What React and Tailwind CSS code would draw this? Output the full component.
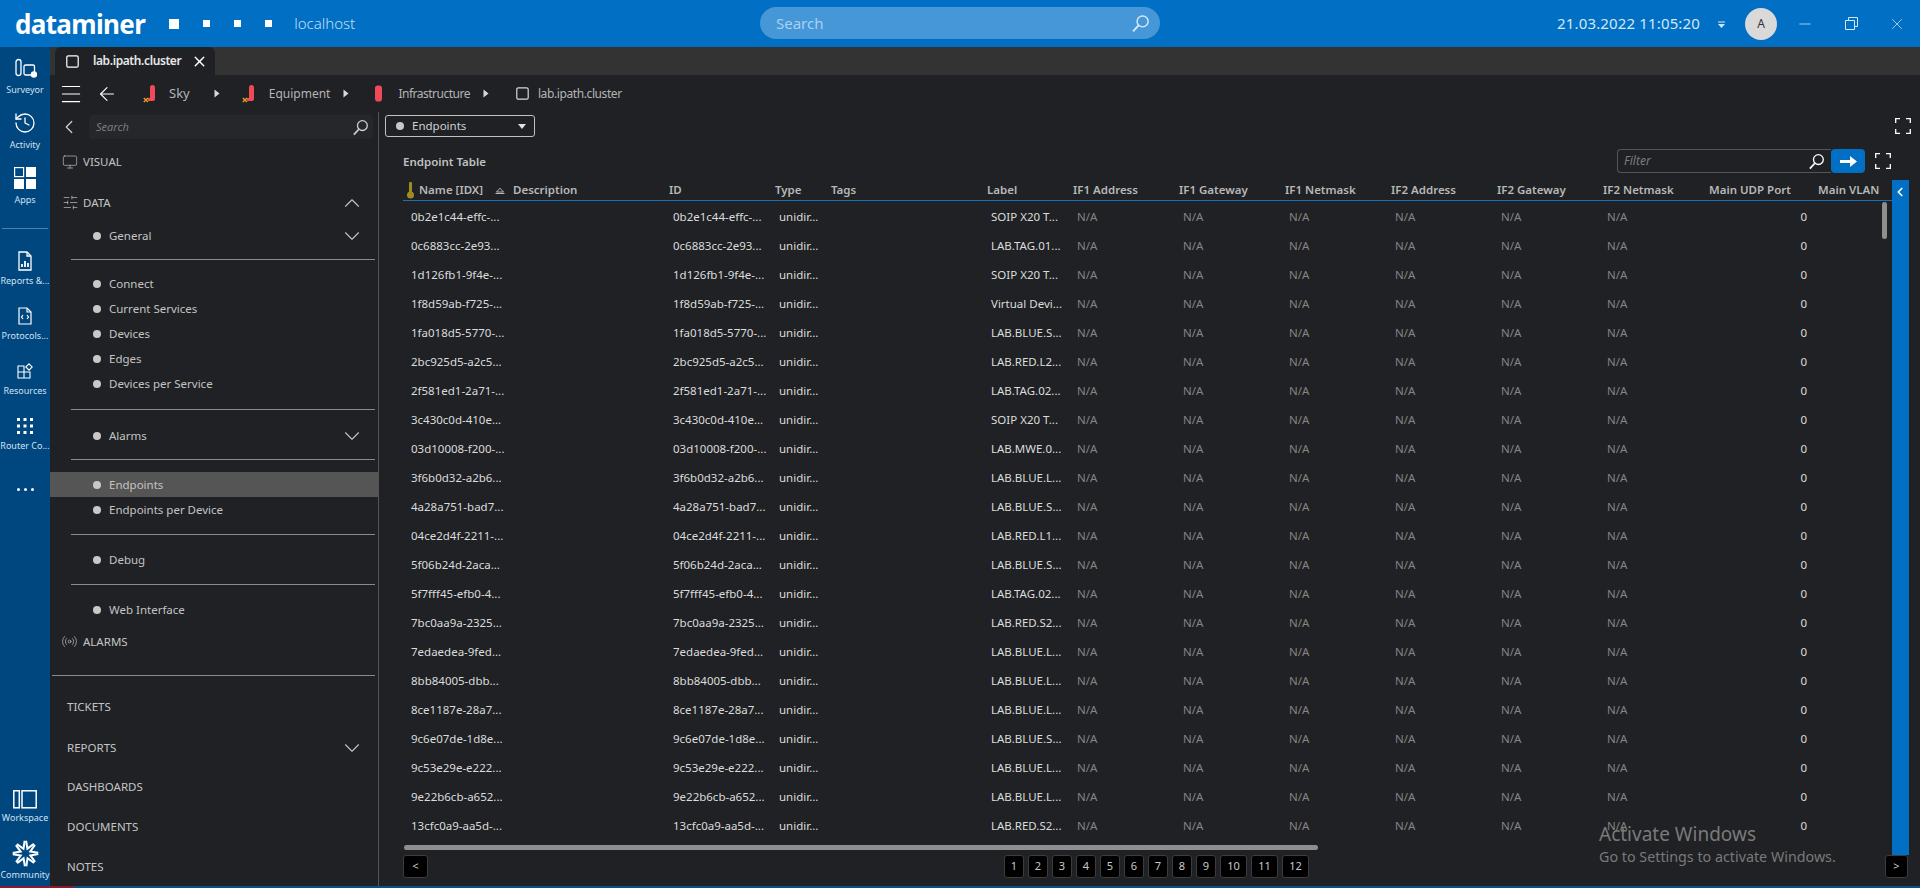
import React from 'react';
import { History, Monitor, SlidersHorizontal, Radio, ChevronUp, ChevronDown, ChevronLeft, ArrowLeft, Menu, X, Minus } from 'lucide-react';

const rows = [
  ['0b2e1c44-effc-...', 'SOIP X20 T...'],
  ['0c6883cc-2e93...', 'LAB.TAG.01...'],
  ['1d126fb1-9f4e-...', 'SOIP X20 T...'],
  ['1f8d59ab-f725-...', 'Virtual Devi...'],
  ['1fa018d5-5770-...', 'LAB.BLUE.S...'],
  ['2bc925d5-a2c5...', 'LAB.RED.L2...'],
  ['2f581ed1-2a71-...', 'LAB.TAG.02...'],
  ['3c430c0d-410e...', 'SOIP X20 T...'],
  ['03d10008-f200-...', 'LAB.MWE.0...'],
  ['3f6b0d32-a2b6...', 'LAB.BLUE.L...'],
  ['4a28a751-bad7...', 'LAB.BLUE.S...'],
  ['04ce2d4f-2211-...', 'LAB.RED.L1...'],
  ['5f06b24d-2aca...', 'LAB.BLUE.S...'],
  ['5f7fff45-efb0-4...', 'LAB.TAG.02...'],
  ['7bc0aa9a-2325...', 'LAB.RED.S2...'],
  ['7edaedea-9fed...', 'LAB.BLUE.L...'],
  ['8bb84005-dbb...', 'LAB.BLUE.L...'],
  ['8ce1187e-28a7...', 'LAB.BLUE.L...'],
  ['9c6e07de-1d8e...', 'LAB.BLUE.S...'],
  ['9c53e29e-e222...', 'LAB.BLUE.L...'],
  ['9e22b6cb-a652...', 'LAB.BLUE.L...'],
  ['13cfc0a9-aa5d-...', 'LAB.RED.S2...'],
];

const gridCols = 'grid grid-cols-[106px_156px_106px_56px_156px_86px_106px_106px_106px_106px_106px_106px_106px_81px]';
const naCols = [0, 1, 2, 3, 4, 5];

const SearchGlass = ({ className = 'text-white', size = 18 }) => (
  <svg width={size} height={size} viewBox="0 0 18 18" fill="none" stroke="currentColor" strokeWidth="1.4" className={className}>
    <circle cx="11" cy="7" r="5.2" />
    <path d="M7.2 10.8 2 16.5" strokeWidth="1.8" />
  </svg>
);

const Corners = ({ className = '' }) => (
  <svg width="16" height="16" viewBox="0 0 16 16" fill="none" stroke="white" strokeWidth="1.3" className={className}>
    <path d="M0.7 5V0.7H5M11 0.7h4.3V5M0.7 11v4.3H5M11 15.3h4.3V11" />
  </svg>
);

const Caret = ({ className = '' }) => (
  <svg width="6" height="9" viewBox="0 0 6 9" fill="#d8d8d8" className={className}><path d="M0.5 0.5 5.5 4.5 0.5 8.5z" /></svg>
);

const PillIcon = ({ withMark }) => (
  <svg width="14" height="18" viewBox="0 0 14 18" className="shrink-0">
    {withMark ? (
      <path d="M7 2.5a2.5 2.5 0 0 1 5 0V14a2 2 0 0 1-2 2H5v-3h2z" fill="#ef4a58" />
    ) : (
      <rect x="3" y="0.5" width="7" height="16" rx="2.8" fill="#ef4a58" />
    )}
    {withMark && <path d="M0.8 13 5 17M5 13 0.8 17" stroke="#e8a020" strokeWidth="1.4" />}
  </svg>
);

const KeyIcon = () => (
  <svg width="7" height="17" viewBox="0 0 7 17" fill="#a08c1e" className="shrink-0">
    <rect x="2" y="0" width="3" height="12" rx="1" />
    <circle cx="3.5" cy="13" r="3.5" />
  </svg>
);

const SortUp = () => (
  <svg width="10" height="7" viewBox="0 0 10 7" fill="none" stroke="#c8c8c8" strokeWidth="0.9">
    <path d="M1.5 5 5 1.2 8.5 5z" /><path d="M0.5 6.5h9" />
  </svg>
);

const CommunityIcon = () => (
  <svg width="27" height="27" viewBox="0 0 28 28" stroke="white" strokeWidth="2.1" fill="none">
    {[0, 45, 90, 135, 180, 225, 270, 315].map((deg) => (
      <path key={deg} d="M9.6 1.5 14 8.6 18.4 1.5" transform={`rotate(${deg + 22} 14 14)`} />
    ))}
  </svg>
);

const RailItem = ({ icon, label, gap = 'gap-1', className = '' }) => (
  <div className={`flex flex-col items-center ${gap} ${className}`}>
    <div className="flex h-6 items-center justify-center">{icon}</div>
    <span className="whitespace-nowrap text-[9px] leading-3 text-[#cfe2f2]">{label}</span>
  </div>
);

const Rail = () => (
  <aside className="flex w-[50px] shrink-0 flex-col bg-[#00467f] pt-[9px] pb-[5px]">
    <RailItem
      className="h-[55px]"
      label="Surveyor"
      icon={
        <svg width="24" height="20" viewBox="0 0 24 20" fill="none" stroke="white" strokeWidth="1.3">
          <rect x="3" y="1.5" width="5" height="16" rx="2.5" />
          <rect x="11" y="7" width="10.5" height="10" rx="1.5" />
          <circle cx="21" cy="16.5" r="2.6" fill="white" />
        </svg>
      }
    />
    <RailItem className="h-[55px]" label="Activity" icon={<History size={24} color="white" strokeWidth={1.3} />} />
    <RailItem
      className="h-[55px]"
      label="Apps"
      icon={
        <svg width="22" height="22" viewBox="0 0 22 22" fill="white">
          <rect x="0.6" y="0.6" width="9" height="9" fill="none" stroke="white" strokeWidth="1.2" />
          <rect x="12" y="0" width="10" height="10" />
          <rect x="0" y="12" width="10" height="10" />
          <rect x="12" y="12" width="10" height="10" />
        </svg>
      }
    />
    <div className="mx-[2px] mt-[7px] h-px bg-[#4f83ad]" />
    <RailItem
      gap="gap-0.5"
      className="mt-5 h-[55px]"
      label="Reports &..."
      icon={
        <svg width="14" height="20" viewBox="0 0 14 20" fill="none" stroke="white" strokeWidth="1.3">
          <path d="M1 1h8l4 4v14H1z" />
          <path d="M9 1v4h4" />
          <path d="M4 16v-3M7 16v-6M10 16v-4" strokeWidth="1.8" />
        </svg>
      }
    />
    <RailItem
      gap="gap-0.5"
      className="h-[55px]"
      label="Protocols..."
      icon={
        <svg width="14" height="18" viewBox="0 0 14 18" fill="none" stroke="white" strokeWidth="1.2">
          <path d="M1 1h8l4 4v12H1z" />
          <path d="M9 1v4h4" />
          <path d="M5 8 3.5 10 5 12M9 8l1.5 2L9 12" />
        </svg>
      }
    />
    <RailItem
      gap="gap-0.5"
      className="h-[55px]"
      label="Resources"
      icon={
        <svg width="16" height="16" viewBox="0 0 16 16" fill="none" stroke="white" strokeWidth="1.1">
          <path d="M1 3h6v6H1zM1 9h6v6H1zM7 9h6v6H7z" />
          <path d="M12 0.8 15.2 4 12 7.2 8.8 4z" />
        </svg>
      }
    />
    <RailItem
      gap="gap-0.5"
      className="h-[55px]"
      label="Router Co..."
      icon={
        <svg width="16" height="16" viewBox="0 0 16 16" fill="white">
          {[0, 6.5, 13].map((y) => [0, 6.5, 13].map((x) => <rect key={`${x}-${y}`} x={x} y={y} width="3" height="3" />))}
        </svg>
      }
    />
    <div className="mt-[15px] flex h-2.5 items-center justify-center gap-1">
      <span className="h-[3px] w-[3px] rounded-full bg-white" />
      <span className="h-[3px] w-[3px] rounded-full bg-white" />
      <span className="h-[3px] w-[3px] rounded-full bg-white" />
    </div>
    <RailItem
      gap="gap-px"
      className="mt-auto"
      label="Workspace"
      icon={
        <svg width="24" height="19" viewBox="0 0 24 19" fill="none" stroke="white" strokeWidth="1.5">
          <rect x="0.8" y="0.8" width="5.5" height="17" />
          <rect x="9" y="0.8" width="14.2" height="17" />
        </svg>
      }
    />
    <RailItem className="mt-[17px]" label="Community" icon={<CommunityIcon />} />
  </aside>
);

const Dot = () => <span className="h-2 w-2 shrink-0 rounded-full bg-[#c8c8c8]" />;

const NavItem = ({ label, chevron, active, className = '' }) => (
  <div className={`flex h-[25px] shrink-0 items-center pl-[43px] pr-[13px] text-[11.5px] text-[#c4c4c4] ${active ? 'bg-[#555555]' : ''} ${className}`}>
    <Dot />
    <span className="ml-2">{label}</span>
    {chevron && <ChevronDown size={26} strokeWidth={1} className="ml-auto shrink-0" />}
  </div>
);

const TopItem = ({ label, icon, chevron, className = '' }) => (
  <div className={`flex h-[25px] shrink-0 items-center pl-3 pr-[13px] text-[11.5px] text-[#c4c4c4] ${className}`}>
    <span className="flex w-[21px] shrink-0">{icon}</span>
    <span>{label}</span>
    {chevron}
  </div>
);

const PlainItem = ({ label, chevron, className = '' }) => (
  <div className={`flex h-[25px] shrink-0 items-center pl-[17px] pr-[13px] text-[11.5px] text-[#c4c4c4] ${className}`}>
    <span>{label}</span>
    {chevron && <ChevronDown size={26} strokeWidth={1} className="ml-auto shrink-0" />}
  </div>
);

const Line = ({ className = '' }) => <div className={`ml-[21px] mr-[3px] h-px shrink-0 bg-[#8a8a8a] ${className}`} />;

const Sidebar = () => (
  <nav className="flex w-[329px] shrink-0 flex-col border-r border-[#555555] pt-[3px]">
    <div className="flex h-6 shrink-0 items-center">
      <ChevronLeft size={22} strokeWidth={1.3} className="ml-2 text-[#d0d0d0]" />
      <div className="ml-[9px] flex h-6 w-[284px] items-center justify-between rounded-sm bg-[#25272a] pl-[7px] pr-1">
        <span className="text-[11px] italic text-[#7c7c7c]">Search</span>
        <SearchGlass size={17} className="text-[#d0d0d0]" />
      </div>
    </div>
    <TopItem className="mt-[10px]" label="VISUAL" icon={<Monitor size={16} strokeWidth={1} />} />
    <TopItem
      className="mt-[16px]"
      label="DATA"
      icon={<SlidersHorizontal size={17} strokeWidth={1} />}
      chevron={<ChevronUp size={26} strokeWidth={1} className="ml-auto shrink-0" />}
    />
    <NavItem className="mt-[8px]" label="General" chevron />
    <Line className="mt-[11px]" />
    <NavItem className="mt-[11px]" label="Connect" />
    <NavItem label="Current Services" />
    <NavItem label="Devices" />
    <NavItem label="Edges" />
    <NavItem label="Devices per Service" />
    <Line className="mt-[13px]" />
    <NavItem className="mt-[13px]" label="Alarms" chevron />
    <Line className="mt-[11px]" />
    <NavItem className="mt-[12px]" label="Endpoints" active />
    <NavItem label="Endpoints per Device" />
    <Line className="mt-[12px]" />
    <NavItem className="mt-[12px]" label="Debug" />
    <Line className="mt-[12px]" />
    <NavItem className="mt-[12px]" label="Web Interface" />
    <TopItem className="mt-[7px]" label="ALARMS" icon={<Radio size={17} strokeWidth={1} className="-ml-[1px]" />} />
    <div className="ml-[2px] mr-[3px] mt-[21px] h-px shrink-0 bg-[#8a8a8a]" />
    <PlainItem className="mt-[18px]" label="TICKETS" />
    <PlainItem className="mt-[16px]" label="REPORTS" chevron />
    <PlainItem className="mt-[14px]" label="DASHBOARDS" />
    <PlainItem className="mt-[15px]" label="DOCUMENTS" />
    <PlainItem className="mt-[15px]" label="NOTES" />
  </nav>
);

const HeaderCell = ({ children, className = '' }) => (
  <div className={`flex items-center whitespace-nowrap text-[11.5px] font-semibold text-[#b8b8b8] ${className}`}>{children}</div>
);

const PageButton = ({ children, className = 'w-5' }) => (
  <button className={`flex h-[23px] items-center justify-center rounded-[3px] border border-[#3c3c3c] bg-black text-[11px] text-[#c8c8c8] ${className}`}>
    {children}
  </button>
);

const EndpointTable = () => (
  <div className="flex">
    <div className="relative h-[675px] w-[1489px] shrink-0 overflow-hidden">
      <div className={`${gridCols} h-5`}>
        <HeaderCell className="pl-1">
          <KeyIcon />
          <span className="ml-[5px]">Name [IDX]</span>
          <span className="ml-3"><SortUp /></span>
        </HeaderCell>
        <HeaderCell className="pl-1">Description</HeaderCell>
        <HeaderCell className="pl-1">ID</HeaderCell>
        <HeaderCell className="pl-1">Type</HeaderCell>
        <HeaderCell className="pl-1">Tags</HeaderCell>
        <HeaderCell className="pl-1">Label</HeaderCell>
        <HeaderCell className="pl-1">IF1 Address</HeaderCell>
        <HeaderCell className="pl-1">IF1 Gateway</HeaderCell>
        <HeaderCell className="pl-1">IF1 Netmask</HeaderCell>
        <HeaderCell className="pl-1">IF2 Address</HeaderCell>
        <HeaderCell className="pl-1">IF2 Gateway</HeaderCell>
        <HeaderCell className="pl-1">IF2 Netmask</HeaderCell>
        <HeaderCell className="pl-1">Main UDP Port</HeaderCell>
        <HeaderCell className="pl-[7px]">Main VLAN</HeaderCell>
      </div>
      <div className="h-px bg-[#1a6fb5]" />
      <div className="mt-px">
        {rows.map(([id, label]) => (
          <div key={id} className={`${gridCols} h-[29px] items-center whitespace-nowrap text-[11.5px] text-[#dcdcdc]`}>
            <div className="pl-2">{id}</div>
            <div />
            <div className="pl-2">{id}</div>
            <div className="pl-2">unidir...</div>
            <div />
            <div className="pl-2">{label}</div>
            {naCols.map((col) => (
              <div key={col} className="pl-2 text-[#858585]">N/A</div>
            ))}
            <div className="pr-1 text-right">0</div>
            <div />
          </div>
        ))}
      </div>
      <div className="ml-px mt-[5px] h-[5px] w-[914px] rounded-full bg-[#8e8e8e]" />
      <div className="absolute left-[1479px] top-[22px] h-[37px] w-[5px] rounded-full bg-[#8e8e8e]" />
    </div>
    <div className="h-[675px] w-[17px] shrink-0 bg-[#006fc4] pt-[5px]">
      <ChevronLeft size={14} strokeWidth={3} className="ml-px text-white" />
    </div>
  </div>
);

const Content = () => (
  <main className="relative flex min-w-0 flex-1 flex-col">
    <div className="flex h-[22px] items-center justify-between pl-1.5 pr-[9px] pt-[3px] box-content">
      <div className="flex h-[22px] w-[150px] items-center rounded-[3px] border border-[#c0c0c0] pl-2.5 pr-2 text-[11.5px] text-[#d0d0d0]">
        <Dot />
        <span className="ml-2">Endpoints</span>
        <svg width="8" height="5" viewBox="0 0 8 5" fill="#e0e0e0" className="ml-auto"><path d="M0 0h8L4 5z" /></svg>
      </div>
      <Corners />
    </div>
    <div className="mt-3 flex h-6 items-center justify-between pl-6 pr-[29px]">
      <span className="pt-px text-[11.5px] font-semibold text-[#c0c0c0]">Endpoint Table</span>
      <div className="flex items-center">
        <div className="flex h-6 w-[214px] items-center justify-between rounded-l border border-r-0 border-[#555555] pl-[6px] pr-1.5">
          <span className="text-[12px] italic text-[#7c7c7c]">Filter</span>
          <SearchGlass size={17} />
        </div>
        <div className="flex h-6 w-[34px] items-center justify-center rounded bg-[#006fc4]">
          <svg width="17" height="11" viewBox="0 0 17 11" fill="white"><path d="M0 4h10V0l7 5.5-7 5.5V7H0z" /></svg>
        </div>
        <Corners className="ml-[10px]" />
      </div>
    </div>
    <div className="mt-[7px] pl-6">
      <EndpointTable />
      <div className="flex w-[1505px] justify-between">
        <PageButton className="w-[25px]">&lt;</PageButton>
        <div className="flex gap-1">
          {[1, 2, 3, 4, 5, 6, 7, 8, 9].map((n) => (
            <PageButton key={n}>{n}</PageButton>
          ))}
          {[10, 11, 12].map((n) => (
            <PageButton key={n} className="w-[27px]">{n}</PageButton>
          ))}
        </div>
        <PageButton className="w-[23px]">&gt;</PageButton>
      </div>
    </div>
    <div className="absolute left-[1220px] top-[710px] whitespace-nowrap text-[#7a7a7a]">
      <div className="text-[19px] leading-6">Activate Windows</div>
      <div className="mt-px text-[14.3px] leading-5">Go to Settings to activate Windows.</div>
    </div>
  </main>
);

const Crumb = ({ label, labelClass = 'ml-[14px]', caretClass = '', last }) => (
  <>
    <span className={`${labelClass} whitespace-nowrap text-[12px] text-[#b4b4b4]`}>{label}</span>
    {!last && <Caret className={caretClass} />}
  </>
);

const Breadcrumb = () => (
  <div className="flex h-[37px] shrink-0 items-center pl-2">
    <Menu size={26} strokeWidth={1} className="text-white" />
    <ArrowLeft size={22} strokeWidth={1.2} className="ml-3 text-white" />
    <span className="ml-[25px]"><PillIcon withMark /></span>
    <Crumb label="Sky" labelClass="ml-[12px] text-[13px]" caretClass="ml-6" />
    <span className="ml-[22px]"><PillIcon withMark /></span>
    <Crumb label="Equipment" labelClass="ml-[13px]" caretClass="ml-[13px]" />
    <span className="ml-[23px]"><PillIcon /></span>
    <Crumb label="Infrastructure" labelClass="ml-3 tracking-[-0.5px]" caretClass="ml-[13px]" />
    <svg width="13" height="13" viewBox="0 0 13 13" fill="none" stroke="#d8d8d8" strokeWidth="1.2" className="ml-[27px]">
      <rect x="0.8" y="0.8" width="11.4" height="11.4" rx="1.5" />
    </svg>
    <Crumb label="lab.ipath.cluster" labelClass="ml-[9px] tracking-[-0.4px]" last />
  </div>
);

const TopBar = () => (
  <header className="flex h-[47px] shrink-0 items-center bg-[#006fc4] text-white">
    <span className="ml-[15px] text-[26px] font-bold leading-none tracking-tight">dataminer</span>
    <span className="ml-[24px] h-2.5 w-2.5 bg-white" />
    <span className="ml-6 h-[7px] w-[7px] bg-white" />
    <span className="ml-6 h-[7px] w-[7px] bg-white" />
    <span className="ml-6 h-[7px] w-[7px] bg-white" />
    <span className="ml-[22px] text-[15px] font-light text-[#c5dff3]">localhost</span>
    <div className="absolute left-[760px] top-[7px] flex h-8 w-[400px] items-center justify-between rounded-full bg-[#4597d8] pl-4 pr-[10px]">
      <span className="text-[15px] text-[#a9d1f0]">Search</span>
      <SearchGlass size={19} className="text-[#d5e8f7]" />
    </div>
    <span className="ml-auto text-[15px] tracking-[0.15px] text-[#d5e7f5]">21.03.2022 11:05:20</span>
    <svg width="7" height="8" viewBox="0 0 7 8" fill="#d5e7f5" className="ml-[18px]">
      <path d="M0 1.5h7V2.5H0zM0 4h7L3.5 8z" />
    </svg>
    <span className="ml-[20px] flex h-8 w-8 items-center justify-center rounded-full bg-[#d9d9d9] text-[12px] text-[#333333]">A</span>
    <Minus size={18} strokeWidth={1} className="ml-[19px] text-[#d5e7f5]" />
    <svg width="13" height="13" viewBox="0 0 13 13" fill="none" stroke="#d5e7f5" strokeWidth="1" className="ml-[31px]">
      <path d="M0.5 3.5h9v9h-9z" /><path d="M3.5 3.5v-3h9v9h-3" />
    </svg>
    <X size={18} strokeWidth={1} className="ml-[30px] mr-[14px] text-[#d5e7f5]" />
  </header>
);

const TabStrip = () => (
  <div className="flex h-7 shrink-0 items-end bg-[#333333] pl-[5px]">
    <div className="flex h-7 w-[160px] items-center rounded-t-md bg-[#1f2124] pl-[11px]">
      <svg width="13" height="13" viewBox="0 0 13 13" fill="none" stroke="white" strokeWidth="1.2">
        <rect x="0.8" y="0.8" width="11.4" height="11.4" rx="1.5" />
      </svg>
      <span className="ml-[14px] text-[12px] font-semibold tracking-[-0.4px] text-[#e8e8e8]">lab.ipath.cluster</span>
      <X size={17} strokeWidth={2} className="ml-[10px] text-white" />
    </div>
  </div>
);

export default function App() {
  return (
    <div className="relative flex h-[888px] w-[1920px] flex-col overflow-hidden bg-[#1f2124] font-['Noto_Sans',sans-serif]">
      <TopBar />
      <div className="flex min-h-0 flex-1">
        <Rail />
        <div className="flex min-w-0 flex-1 flex-col">
          <TabStrip />
          <Breadcrumb />
          <div className="flex min-h-0 flex-1">
            <Sidebar />
            <Content />
          </div>
        </div>
      </div>
      <div className="flex h-[2px] shrink-0 bg-[#0a4f85]">
        <div className="w-[74px] bg-[#8c1a2e]" />
      </div>
    </div>
  );
}
